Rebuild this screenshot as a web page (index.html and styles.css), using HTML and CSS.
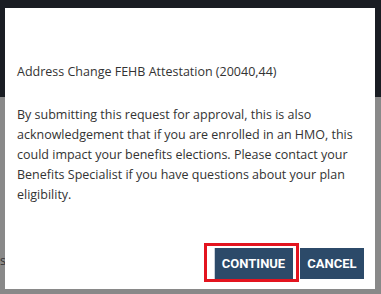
FILE: index.html
```html
<!DOCTYPE html>
<html lang="en">
<head>
  <meta charset="UTF-8">
  <title>Address Change FEHB Attestation</title>
  <link rel="stylesheet" href="styles.css">
</head>
<body>
  <div class="page">
    <div class="page-header"></div>
    <div class="page-content">
      <p class="page-text">s</p>
    </div>
  </div>

  <div class="modal" role="dialog" aria-labelledby="modal-title">
    <div class="modal-body">
      <p id="modal-title" class="modal-title">Address Change FEHB Attestation (20040,44)</p>
      <p class="modal-text">By submitting this request for approval, this is also acknowledgement that if you are enrolled in an HMO, this could impact your benefits elections. Please contact your Benefits Specialist if you have questions about your plan eligibility.</p>
    </div>
    <div class="modal-footer">
      <button class="button-blue button-continue">Continue</button>
      <button class="button-blue button-cancel">Cancel</button>
    </div>
  </div>
</body>
</html>
```

FILE: styles.css
```css
body {
  margin: 0;
  font-family: 'Open Sans', 'Noto Sans', sans-serif;
  font-size: 12.5px;
  color: #333;
  background: #898989;
}

.page {
  display: flex;
  flex-direction: column;
  height: 294px;
}
.page-header {
  height: 97px;
  background: #1a1d23;
}
.page-content {
  flex: 1;
  background: #898989;
}
.page-text {
  margin: 155px 0 0 0;
  color: #333;
}

.modal {
  position: absolute;
  left: 5px;
  top: 8px;
  width: 370px;
  height: 281px;
  background: #fff;
  box-sizing: border-box;
  display: flex;
  flex-direction: column;
  padding: 54px 11px 10px 12px;
}
.modal-body {
  width: 347px;
}
.modal-title {
  margin: 0 0 23px 0;
  line-height: 20px;
}
.modal-text {
  margin: 0;
  width: 340px;
  line-height: 20px;
}

.modal-footer {
  margin-top: auto;
  display: flex;
  justify-content: flex-end;
  gap: 7px;
}

.button-blue {
  display: inline-block;
  outline: 0;
  border: 0;
  cursor: pointer;
  background-color: #2c4a69;
  height: 31px;
  padding: 0;
  font-family: Roboto, 'Liberation Sans', sans-serif;
  font-size: 13px;
  font-weight: 700;
  color: #fff;
  text-transform: uppercase;
}
.button-continue {
  position: relative;
  width: 79px;
  box-shadow: inset 1px 0 0 #c8d0da;
}
.button-cancel {
  width: 64px;
}
.button-continue:after {
  content: "";
  position: absolute;
  left: -10px;
  top: -5px;
  right: -6px;
  bottom: -3px;
  border: 3px solid #e3141f;
}
```
